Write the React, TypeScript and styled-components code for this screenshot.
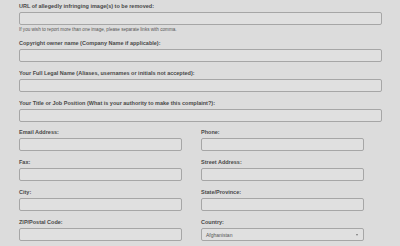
import React from "react"
import styled, { createGlobalStyle } from "styled-components"

const GlobalStyle = createGlobalStyle`
    html, body {
        margin:0;
        padding:0;
        background:#dcdcdc;
    }
    body {
        font-family:"Liberation Sans", Arial, sans-serif;
    }
`

const fullRows = [
    { label: "URL of allegedly infringing image(s) to be removed:", help: "If you wish to report more than one image, please separate links with comma." },
    { label: "Copyright owner name (Company Name if applicable):" },
    { label: "Your Full Legal Name (Aliases, usernames or initials not accepted):" },
    { label: "Your Title or Job Position (What is your authority to make this complaint?):" },
]

const pairs = [
    ["Email Address:", "Phone:"],
    ["Fax:", "Street Address:"],
    ["City:", "State/Province:"],
]

const App = () => {
    return (
        <>
            <GlobalStyle />
            <Page>
                {fullRows.map((row) => (
                    <Field key={row.label}>
                        <Label>{row.label}</Label>
                        <Input wide />
                        {row.help && <Help>{row.help}</Help>}
                    </Field>
                ))}
                <Grid>
                    {pairs.map((pair) =>
                        pair.map((label) => (
                            <Field key={label}>
                                <Label>{label}</Label>
                                <Input />
                            </Field>
                        ))
                    )}
                    <Field>
                        <Label>ZIP/Postal Code:</Label>
                        <Input />
                    </Field>
                    <Field>
                        <Label>Country:</Label>
                        <Select>
                            <SelectText>Afghanistan</SelectText>
                            <Arrow />
                        </Select>
                    </Field>
                </Grid>
            </Page>
        </>
    )
}

const Page = styled.div`
    width:400px;
    height:246px;
    box-sizing:border-box;
    padding:3px 0 0 19px;
    display:flex;
    flex-direction:column;
    gap:8px;
    overflow:hidden;
`
const Field = styled.div`
    display:flex;
    flex-direction:column;
`
const Label = styled.div`
    height:8px;
    line-height:7px;
    margin-bottom:1px;
    font-size:5.5px;
    font-weight:bold;
    color:#484848;
    white-space:nowrap;
`
const Input = styled.div<{ wide?: boolean }>`
    width:${(p) => (p.wide ? "363px" : "163px")};
    height:13px;
    box-sizing:border-box;
    border:1px solid #a6a6a6;
    border-radius:2px;
    background:#e0e0e0;
`
const Help = styled.div`
    margin-top:2px;
    font-size:4.6px;
    line-height:5px;
    color:#555;
    white-space:nowrap;
`
const Grid = styled.div`
    display:grid;
    grid-template-columns:163px 163px;
    column-gap:19px;
    row-gap:8px;
    margin-top:-1px;
`
const Select = styled.div`
    width:163px;
    height:13px;
    box-sizing:border-box;
    border:1px solid #a6a6a6;
    border-radius:2px;
    background:#e0e0e0;
    display:flex;
    align-items:center;
    justify-content:space-between;
    padding:0 5px 0 4px;
`
const SelectText = styled.span`
    font-size:5px;
    color:#555;
`
const Arrow = styled.span`
    width:0;
    height:0;
    border-left:1.5px solid transparent;
    border-right:1.5px solid transparent;
    border-top:2px solid #777;
`

export default App
